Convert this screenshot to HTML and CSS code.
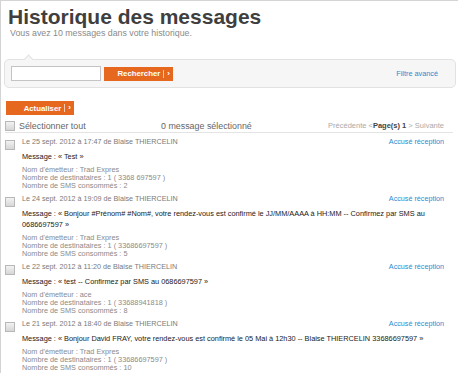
FILE: index.html
```html
<!DOCTYPE html>
<html lang="fr">
<head>
	<meta charset="UTF-8">
	<title>Historique des messages</title>
	<link rel="stylesheet" href="styles.css">
</head>
<body>
<div class="page">
	<div class="head">
		<h1>Historique des messages</h1>
		<p class="intro">Vous avez 10 messages dans votre historique.</p>
	</div>

	<div class="search">
		<input class="search-input" type="text">
		<a class="btn btn-search" href="#">Rechercher<span class="arrow">›</span></a>
		<a class="adv" href="#">Filtre avancé</a>
	</div>

	<a class="btn btn-refresh" href="#">Actualiser<span class="arrow">›</span></a>

	<div class="toolbar">
		<label class="select-all"><span class="check"></span>Sélectionner tout</label>
		<span class="count">0 message sélectionné</span>
		<span class="pager">Précédente &lt;<b>Page(s) 1</b> &gt; Suivante</span>
	</div>

	<ul class="list">
		<li class="msg">
			<span class="check"></span>
			<div class="msg-body">
				<div class="msg-top">
					<span class="date">Le 25 sept. 2012 à 17:47 de Blaise THIERCELIN</span>
					<a class="ack" href="#">Accusé réception</a>
				</div>
				<p class="text">Message : « Test »</p>
				<p class="info">Nom d'émetteur : Trad Expres<br>Nombre de destinataires : 1 ( 3368 697597 )<br>Nombre de SMS consommés : 2</p>
			</div>
		</li>
		<li class="msg">
			<span class="check"></span>
			<div class="msg-body">
				<div class="msg-top">
					<span class="date">Le 24 sept. 2012 à 19:09 de Blaise THIERCELIN</span>
					<a class="ack" href="#">Accusé réception</a>
				</div>
				<p class="text">Message : « Bonjour #Prénom# #Nom#, votre rendez-vous est confirmé le JJ/MM/AAAA à HH:MM -- Confirmez par SMS au 0686697597 »</p>
				<p class="info">Nom d'émetteur : Trad Expres<br>Nombre de destinataires : 1 ( 33686697597 )<br>Nombre de SMS consommés : 5</p>
			</div>
		</li>
		<li class="msg">
			<span class="check"></span>
			<div class="msg-body">
				<div class="msg-top">
					<span class="date">Le 22 sept. 2012 à 11:20 de Blaise THIERCELIN</span>
					<a class="ack" href="#">Accusé réception</a>
				</div>
				<p class="text">Message : « test -- Confirmez par SMS au 0686697597 »</p>
				<p class="info">Nom d'émetteur : ace<br>Nombre de destinataires : 1 ( 33688941818 )<br>Nombre de SMS consommés : 8</p>
			</div>
		</li>
		<li class="msg">
			<span class="check"></span>
			<div class="msg-body">
				<div class="msg-top">
					<span class="date">Le 21 sept. 2012 à 18:40 de Blaise THIERCELIN</span>
					<a class="ack" href="#">Accusé réception</a>
				</div>
				<p class="text">Message : « Bonjour David FRAY, votre rendez-vous est confirmé le 05 Mai à 12h30 -- Blaise THIERCELIN 33686697597 »</p>
				<p class="info">Nom d'émetteur : Trad Expres<br>Nombre de destinataires : 1 ( 33686697597 )<br>Nombre de SMS consommés : 10</p>
			</div>
		</li>
	</ul>
</div>
</body>
</html>
```

FILE: styles.css
```css
body,div,ul,li,h1,p,input { margin:0; padding:0; }
body { background:#fff; color:#555; font-family:"Liberation Sans", Arial, Helvetica, sans-serif; }
a { text-decoration:none; }
ul,li { list-style:none; }

.page {
	height:372px;
	overflow:hidden;
	border-top:1px solid #d4d4d4;
	border-left:1px solid #d4d4d4;
}

/* titre */
.head { padding:6px 0 0 7px; }
.head h1 {
	font-size:21px;
	line-height:20px;
	font-weight:bold;
	color:#3f3f3f;
}
.intro {
	margin:1px 0 0 2px;
	font-size:8.8px;
	line-height:10px;
	color:#8a8a8a;
}

/* recherche */
.search {
	position:relative;
	display:flex;
	align-items:center;
	margin:21px 2px 0 3px;
	padding:6px 17px 6px 6px;
	background:#f6f6f6;
	border:1px solid #e2e2e2;
	border-radius:5px;
}
.search:before {
	content:"";
	position:absolute;
	top:-4px;
	left:20px;
	width:6px;
	height:6px;
	background:#f6f6f6;
	border-top:1px solid #e2e2e2;
	border-left:1px solid #e2e2e2;
	transform:rotate(45deg);
}
.search-input {
	width:90px;
	height:15px;
	box-sizing:border-box;
	border:1px solid #c4c4c4;
	background:#fff;
}
.btn {
	display:flex;
	align-items:center;
	justify-content:flex-end;
	box-sizing:border-box;
	height:14px;
	padding-right:3px;
	background:#e5681e;
	color:#fff;
	font-size:7.8px;
	font-weight:bold;
}
.btn .arrow {
	margin-left:3px;
	padding-left:3px;
	border-left:1px solid #f6c9ad;
	line-height:8px;
	font-size:8px;
}
.btn-search { width:69px; margin-left:3px; }
.adv {
	margin-left:auto;
	font-size:7.3px;
	color:#2d8bd0;
}
.btn-refresh {
	width:68px;
	margin:13px 0 0 5px;
}

/* barre d'outils */
.toolbar {
	display:flex;
	align-items:center;
	height:13px;
	margin:4px 5px 0 4px;
	padding-right:9px;
	border-bottom:1px solid #e4e4e4;
	font-size:8.9px;
	color:#666;
}
.check {
	flex:none;
	width:10px;
	height:10px;
	box-sizing:border-box;
	border:1px solid #b8b8b8;
	background:linear-gradient(#f2f2f2, #d6d6d6);
}
.select-all {
	display:flex;
	align-items:center;
	gap:4px;
	width:156px;
}
.pager {
	margin-left:auto;
	font-size:7.5px;
	color:#aaa;
}
.pager b { color:#444; }

/* messages */
.list { padding-top:4px; }
.msg {
	display:flex;
	gap:7px;
	padding:0 14px 4px 4px;
}
.msg .check { margin-top:3px; }
.msg-body { flex:1; }
.msg-top {
	display:flex;
	justify-content:space-between;
	line-height:10px;
	font-size:7.2px;
}
.date { color:#7a7a7a; }
.ack { color:#2d8bd0; }
.text {
	margin-top:4px;
	line-height:11px;
	font-size:7.35px;
	color:#1a1a1a;
}
.info {
	margin-top:4px;
	line-height:8px;
	font-size:7.3px;
	color:#8a8a8a;
}
```
